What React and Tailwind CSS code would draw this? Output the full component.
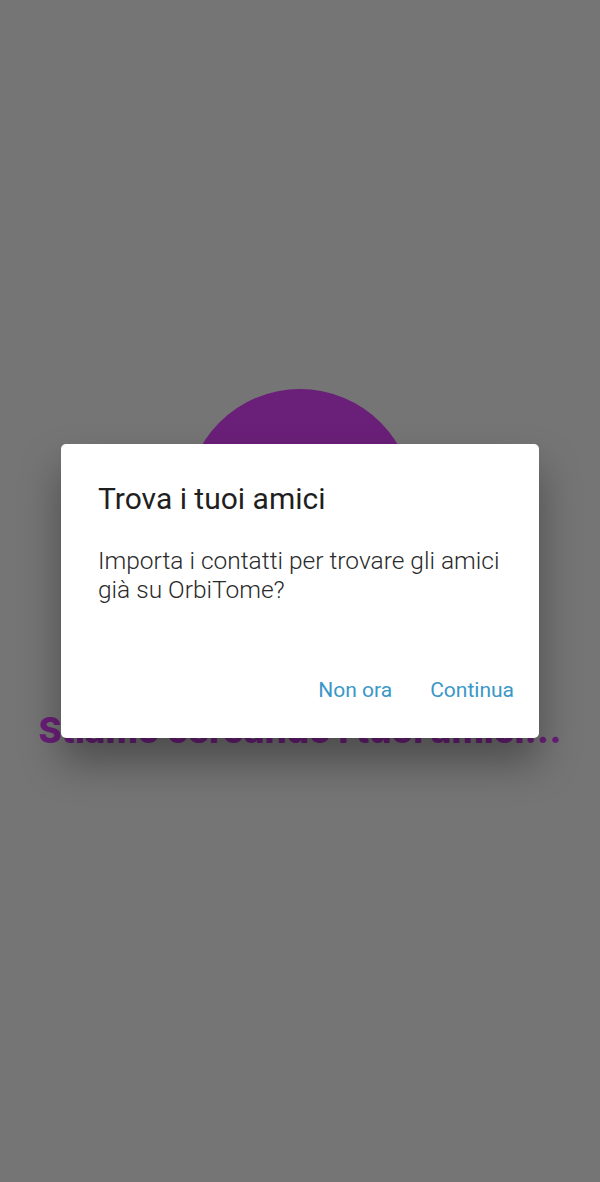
import React from "react";

export default function App() {
  return (
    <div className="relative w-[600px] h-[1182px] overflow-hidden bg-[#757575]">
      <div className="flex flex-col items-center pt-[389px]">
        <div className="w-[228px] h-[228px] rounded-full bg-[#6a1f78]" />
        <div
          className="mt-[93px] text-[35px] leading-[40px] font-extrabold text-[#6a1f78] whitespace-nowrap"
          style={{ fontFamily: '"Inter", "Noto Sans", sans-serif' }}
        >
          Stiamo cercando i tuoi amici...
        </div>
      </div>

      <div className="absolute inset-0 flex items-center justify-center">
        <div
          className="w-[478px] h-[294px] bg-white rounded-[5px] shadow-[0_24px_40px_rgba(0,0,0,0.35)] flex flex-col pl-[37px] pr-[25px]"
          style={{ fontFamily: 'Roboto, "Noto Sans", sans-serif' }}
        >
          <div className="mt-[37px] text-[30px] leading-[36px] text-[#1f1f1f]">
            Trova i tuoi amici
          </div>
          <div className="mt-[30px] text-[24.5px] leading-[28.5px] font-light text-[#2a2a2a]">
            Importa i contatti per trovare gli amici
            <br />
            già su OrbiTome?
          </div>
          <div className="mt-auto mb-[35px] flex justify-end gap-[38px] text-[21px] leading-[26px] text-[#3a97c8]">
            <span>Non ora</span>
            <span>Continua</span>
          </div>
        </div>
      </div>
    </div>
  );
}
